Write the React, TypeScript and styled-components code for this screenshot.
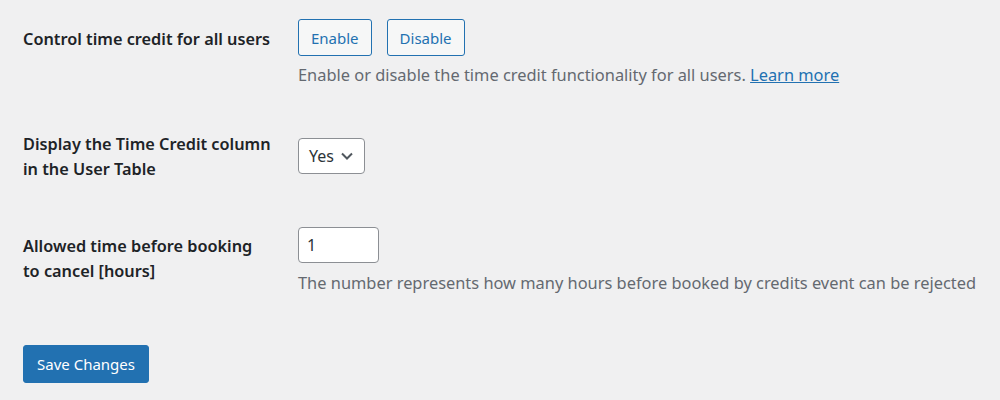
import React from "react";
import styled, { createGlobalStyle } from "styled-components";

const Global = createGlobalStyle`
  html, body { margin: 0; padding: 0; background: #f0f0f1; }
  body {
    font-family: "Noto Sans", "Open Sans", sans-serif;
    color: #1d2327;
  }
`;

const Page = styled.div`
  padding: 19px 23px 0 23px;
  display: flex;
  flex-direction: column;
  gap: 45px;
`;

const Row = styled.div`
  display: grid;
  grid-template-columns: 275px 1fr;
  align-items: start;
`;

const Label = styled.div<{ $offset: number }>`
  padding-top: ${(p) => p.$offset}px;
  font-size: 16.3px;
  font-weight: 600;
  line-height: 25px;
  color: #1d2327;
`;

const Field = styled.div<{ $offset?: number }>`
  padding-top: ${(p) => p.$offset ?? 0}px;
  display: flex;
  flex-direction: column;
  align-items: flex-start;
`;

const ButtonGroup = styled.div`
  display: flex;
  gap: 15px;
`;

const SecondaryButton = styled.button`
  height: 37px;
  padding: 0 12px;
  border: 1px solid #2271b1;
  border-radius: 3px;
  background: #f6f7f7;
  color: #2271b1;
  font-family: inherit;
  font-size: 15px;
  cursor: pointer;
`;

const Description = styled.p<{ $mt: number }>`
  margin: ${(p) => p.$mt}px 0 0 0;
  font-size: 16.4px;
  line-height: 24px;
  color: #646970;
`;

const Link = styled.a`
  color: #2271b1;
  text-decoration: underline;
`;

const SelectBox = styled.div`
  width: 67px;
  height: 36px;
  box-sizing: border-box;
  border: 1px solid #8c8f94;
  border-radius: 4px;
  background: #fff;
  display: flex;
  align-items: center;
  padding: 0 9px 0 10px;
  gap: 6px;
  font-size: 16px;
  color: #2c3338;
`;

const NumberInput = styled.input`
  width: 81px;
  height: 36px;
  box-sizing: border-box;
  border: 1px solid #8c8f94;
  border-radius: 4px;
  background: #fff;
  padding: 0 8px;
  font-family: inherit;
  font-size: 16px;
  color: #2c3338;
  outline: none;
`;

const PrimaryButton = styled.button`
  align-self: flex-start;
  margin-top: 5px;
  height: 38px;
  width: 126px;
  border: 1px solid #2271b1;
  border-radius: 3px;
  background: #2271b1;
  color: #fff;
  font-family: inherit;
  font-size: 15px;
  cursor: pointer;
`;

export default function App() {
  return (
    <>
      <Global />
      <Page>
        <Row>
          <Label $offset={8}>Control time credit for all users</Label>
          <Field>
            <ButtonGroup>
              <SecondaryButton>Enable</SecondaryButton>
              <SecondaryButton>Disable</SecondaryButton>
            </ButtonGroup>
            <Description $mt={7}>
              Enable or disable the time credit functionality for all users.{" "}
              <Link href="#">Learn more</Link>
            </Description>
          </Field>
        </Row>
        <Row>
          <Label $offset={0}>
            Display the Time Credit column
            <br />
            in the User Table
          </Label>
          <Field $offset={6}>
            <SelectBox>
              <span>Yes</span>
              <svg width="14" height="14" viewBox="0 0 14 14" fill="none">
                <path d="M2 4.5 L7 9.5 L12 4.5" stroke="#50575e" strokeWidth="2" />
              </svg>
            </SelectBox>
          </Field>
        </Row>
        <Row>
          <Label $offset={7}>
            Allowed time before booking
            <br />
            to cancel [hours]
          </Label>
          <Field>
            <NumberInput defaultValue="1" />
            <Description $mt={8}>
              The number represents how many hours before booked by credits event can be rejected
            </Description>
          </Field>
        </Row>
        <PrimaryButton>Save Changes</PrimaryButton>
      </Page>
    </>
  );
}
